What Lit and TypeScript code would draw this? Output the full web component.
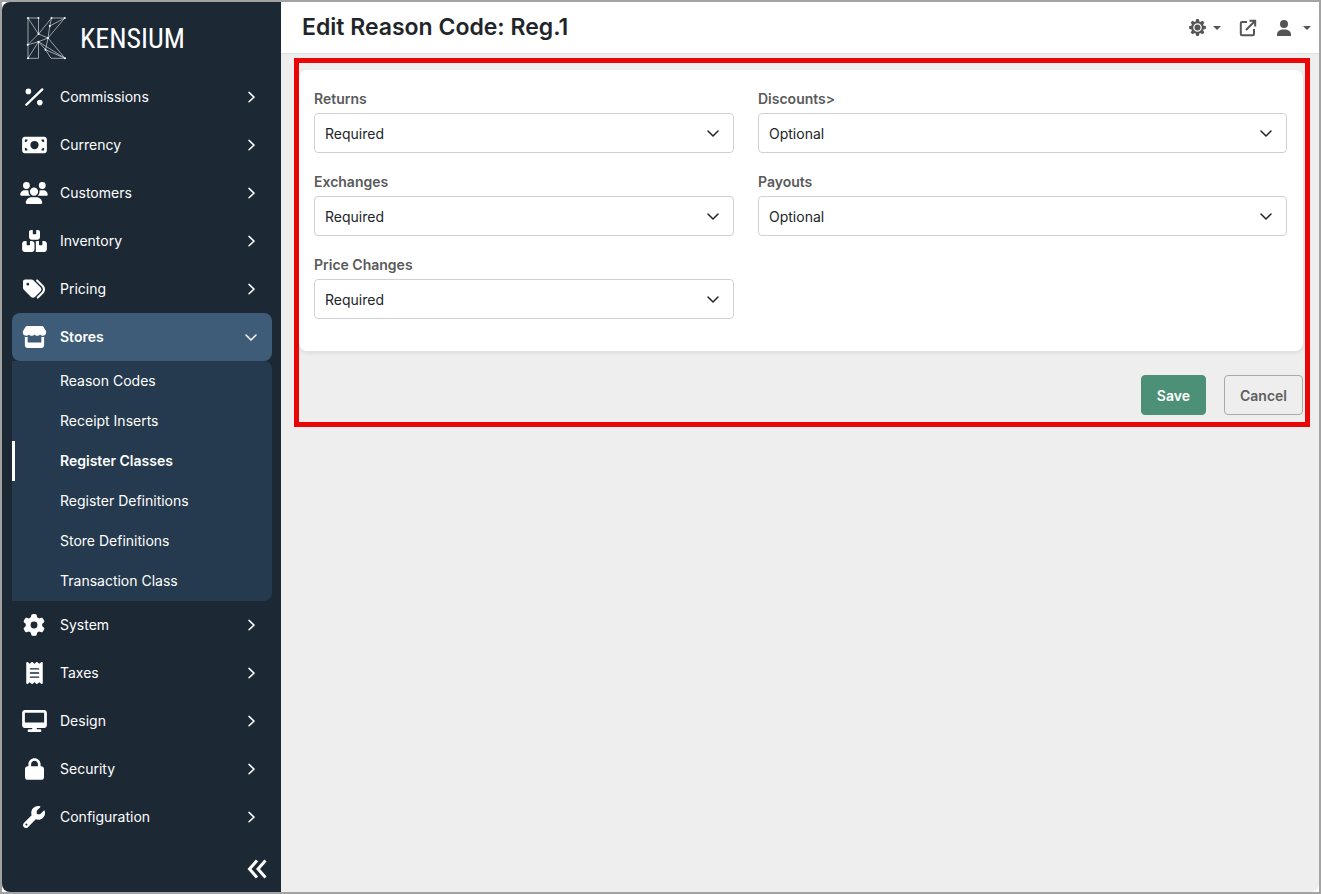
import { LitElement, html, svg, css, nothing } from "lit";
import { customElement, property, state } from "lit/decorators.js";
import { classMap } from "lit/directives/class-map.js";

interface Icon {
  box: string;
  width: number;
  height: number;
  path: string;
}

const ICONS: Record<string, Icon> = {
  percent: {
    box: "0 0 24 22",
    width: 24,
    height: 22,
    path: "M19.4 2.6a1.2 1.2 0 0 1 1.7 1.7L5.2 19.6a1.2 1.2 0 0 1-1.7-1.7zM6.4 2.6a2.8 2.8 0 1 1 0 5.6 2.8 2.8 0 1 1 0-5.6zM17.8 13.8a2.8 2.8 0 1 1 0 5.6 2.8 2.8 0 1 1 0-5.6z",
  },
  money: {
    box: "0 0 576 512",
    width: 25,
    height: 22,
    path: "M64 64C28.7 64 0 92.7 0 128V384c0 35.3 28.7 64 64 64H512c35.3 0 64-28.7 64-64V128c0-35.3-28.7-64-64-64H64zm64 320H64V320c35.3 0 64 28.7 64 64zM64 192V128h64c0 35.3-28.7 64-64 64zM448 384c0-35.3 28.7-64 64-64v64H448zm64-192c-35.3 0-64-28.7-64-64h64v64zM288 160a96 96 0 1 1 0 192 96 96 0 1 1 0-192z",
  },
  users: {
    box: "0 0 640 512",
    width: 28,
    height: 22,
    path: "M144 0a80 80 0 1 1 0 160A80 80 0 1 1 144 0zM512 0a80 80 0 1 1 0 160A80 80 0 1 1 512 0zM0 298.7C0 239.8 47.8 192 106.7 192h42.7c15.9 0 31 3.5 44.6 9.7c-1.3 7.2-1.9 14.7-1.9 22.3c0 38.2 16.8 72.5 43.3 96c-.2 0-.4 0-.7 0H21.3C9.6 320 0 310.4 0 298.7zM405.3 320c-.2 0-.4 0-.7 0c26.6-23.5 43.3-57.8 43.3-96c0-7.6-.7-15-1.9-22.3c13.6-6.3 28.7-9.7 44.6-9.7h42.7C592.2 192 640 239.8 640 298.7c0 11.8-9.6 21.3-21.3 21.3H405.3zM224 224a96 96 0 1 1 192 0 96 96 0 1 1 -192 0zM128 485.3C128 411.7 187.7 352 261.3 352H378.7C452.3 352 512 411.7 512 485.3c0 14.7-11.9 26.7-26.7 26.7H154.7c-14.7 0-26.7-11.9-26.7-26.7z",
  },
  boxes: {
    box: "0 0 576 512",
    width: 25,
    height: 22,
    path: "M248 0H208c-26.5 0-48 21.5-48 48V160c0 35.3 28.7 64 64 64H352c35.3 0 64-28.7 64-64V48c0-26.5-21.5-48-48-48H328V80c0 8.8-7.2 16-16 16H264c-8.8 0-16-7.2-16-16V0zM64 256c-35.3 0-64 28.7-64 64V448c0 35.3 28.7 64 64 64H224c35.3 0 64-28.7 64-64V320c0-35.3-28.7-64-64-64H184v80c0 8.8-7.2 16-16 16H120c-8.8 0-16-7.2-16-16V256H64zM352 512H512c35.3 0 64-28.7 64-64V320c0-35.3-28.7-64-64-64H472v80c0 8.8-7.2 16-16 16H408c-8.8 0-16-7.2-16-16V256H352c-15 0-28.8 5.1-39.7 13.8c4.9 10.4 7.7 22 7.7 34.2V464c0 12.2-2.8 23.8-7.7 34.2C323.2 506.9 337 512 352 512z",
  },
  tags: {
    box: "0 0 512 512",
    width: 22,
    height: 22,
    path: "M345 39.1L472.8 168.4c52.4 53 52.4 138.2 0 191.2L360.8 472.9c-9.3 9.4-24.5 9.5-33.9 .2s-9.5-24.5-.2-33.9L438.6 325.9c33.9-34.3 33.9-89.4 0-123.7L310.9 72.9c-9.3-9.4-9.2-24.6 .2-33.9s24.6-9.2 33.9 .2zM0 229.5V80C0 53.5 21.5 32 48 32H197.5c17 0 33.3 6.7 45.3 18.7l168 168c25 25 25 65.5 0 90.5L277.3 442.7c-25 25-65.5 25-90.5 0l-168-168C6.7 262.7 0 246.5 0 229.5zM144 144a32 32 0 1 0 -64 0 32 32 0 1 0 64 0z",
  },
  store: {
    box: "0 0 576 512",
    width: 25,
    height: 22,
    path: "M547.6 103.8L490.3 13.1C485.2 5 476.1 0 466.4 0H109.6C99.9 0 90.8 5 85.7 13.1L28.3 103.8c-29.6 46.8-3.4 111.9 51.9 119.4c4 .5 8.1 .8 12.1 .8c26.1 0 49.3-11.4 65.2-29c15.9 17.6 39.1 29 65.2 29c26.1 0 49.3-11.4 65.2-29c15.9 17.6 39.1 29 65.2 29c26.2 0 49.3-11.4 65.2-29c16 17.6 39.1 29 65.2 29c4.1 0 8.1-.3 12.1-.8c55.5-7.4 81.8-72.5 52.1-119.4zM499.7 254.9l-.1 0c-5.3 .7-10.7 1.1-16.2 1.1c-12.4 0-24.3-1.9-35.4-5.3V384H128V250.6c-11.2 3.5-23.2 5.4-35.6 5.4c-5.5 0-11-.4-16.3-1.1l-.1 0c-4.1-.6-8.1-1.3-12-2.3V384v64c0 35.3 28.7 64 64 64H448c35.3 0 64-28.7 64-64V384 252.6c-4 1-8 1.8-12.3 2.3z",
  },
  gear: {
    box: "0 0 512 512",
    width: 22,
    height: 22,
    path: "M495.9 166.6c3.2 8.7 .5 18.4-6.4 24.6l-43.3 39.4c1.1 8.3 1.7 16.8 1.7 25.4s-.6 17.1-1.7 25.4l43.3 39.4c6.9 6.2 9.6 15.9 6.4 24.6c-4.4 11.9-9.7 23.3-15.8 34.3l-4.7 8.1c-6.6 11-14 21.4-22.1 31.2c-5.9 7.2-15.7 9.6-24.5 6.8l-55.7-17.7c-13.4 10.3-28.2 18.9-44 25.4l-12.5 57.1c-2 9.1-9 16.3-18.2 17.8c-13.8 2.3-28 3.5-42.5 3.5s-28.7-1.2-42.5-3.5c-9.2-1.5-16.2-8.7-18.2-17.8l-12.5-57.1c-15.8-6.5-30.6-15.1-44-25.4L83.1 425.9c-8.8 2.8-18.6 .3-24.5-6.8c-8.1-9.8-15.5-20.2-22.1-31.2l-4.7-8.1c-6.1-11-11.4-22.4-15.8-34.3c-3.2-8.7-.5-18.4 6.4-24.6l43.3-39.4C64.6 273.1 64 264.6 64 256s.6-17.1 1.7-25.4L22.4 191.2c-6.9-6.2-9.6-15.9-6.4-24.6c4.4-11.9 9.7-23.3 15.8-34.3l4.7-8.1c6.6-11 14-21.4 22.1-31.2c5.9-7.2 15.7-9.6 24.5-6.8l55.7 17.7c13.4-10.3 28.2-18.9 44-25.4l12.5-57.1c2-9.1 9-16.3 18.2-17.8C227.3 1.2 241.5 0 256 0s28.7 1.2 42.5 3.5c9.2 1.5 16.2 8.7 18.2 17.8l12.5 57.1c15.8 6.5 30.6 15.1 44 25.4l55.7-17.7c8.8-2.8 18.6-.3 24.5 6.8c8.1 9.8 15.5 20.2 22.1 31.2l4.7 8.1c6.1 11 11.4 22.4 15.8 34.3zM256 336a80 80 0 1 0 0-160 80 80 0 1 0 0 160z",
  },
  receipt: {
    box: "0 0 384 512",
    width: 17,
    height: 22,
    path: "M14 2.2C22.5-1.7 32.5-.3 39.6 5.8L80 40.4 120.4 5.8c9-7.7 22.3-7.7 31.2 0L192 40.4 232.4 5.8c9-7.7 22.2-7.7 31.2 0L304 40.4 344.4 5.8c7.1-6.1 17.1-7.5 25.6-3.6s14 12.4 14 21.8V488c0 9.4-5.5 17.9-14 21.8s-18.5 2.5-25.6-3.6L304 471.6l-40.4 34.6c-9 7.7-22.2 7.7-31.2 0L192 471.6l-40.4 34.6c-9 7.7-22.3 7.7-31.2 0L80 471.6 39.6 506.2c-7.1 6.1-17.1 7.5-25.6 3.6S0 497.4 0 488V24C0 14.6 5.5 6.1 14 2.2zM96 144c-8.8 0-16 7.2-16 16s7.2 16 16 16H288c8.8 0 16-7.2 16-16s-7.2-16-16-16H96zM80 352c0 8.8 7.2 16 16 16H288c8.8 0 16-7.2 16-16s-7.2-16-16-16H96c-8.8 0-16 7.2-16 16zM96 240c-8.8 0-16 7.2-16 16s7.2 16 16 16H288c8.8 0 16-7.2 16-16s-7.2-16-16-16H96z",
  },
  desktop: {
    box: "0 0 576 512",
    width: 25,
    height: 22,
    path: "M64 0C28.7 0 0 28.7 0 64V352c0 35.3 28.7 64 64 64H240l-10.7 32H160c-17.7 0-32 14.3-32 32s14.3 32 32 32H416c17.7 0 32-14.3 32-32s-14.3-32-32-32H346.7L336 416H512c35.3 0 64-28.7 64-64V64c0-35.3-28.7-64-64-64H64zM512 64V288H64V64H512z",
  },
  lock: {
    box: "0 0 448 512",
    width: 19,
    height: 22,
    path: "M144 144v48H304V144c0-44.2-35.8-80-80-80s-80 35.8-80 80zM80 192V144C80 64.5 144.5 0 224 0s144 64.5 144 144v48h16c35.3 0 64 28.7 64 64V448c0 35.3-28.7 64-64 64H64c-35.3 0-64-28.7-64-64V256c0-35.3 28.7-64 64-64H80z",
  },
  wrench: {
    box: "0 0 512 512",
    width: 22,
    height: 22,
    path: "M352 320c88.4 0 160-71.6 160-160c0-15.3-2.2-30.1-6.2-44.2c-3.1-10.8-16.4-13.2-24.3-5.3l-76.8 76.8c-3 3-7.1 4.7-11.3 4.7H336c-8.8 0-16-7.2-16-16V118.6c0-4.2 1.7-8.3 4.7-11.3l76.8-76.8c7.9-7.9 5.4-21.2-5.3-24.3C382.1 2.2 367.3 0 352 0C263.6 0 192 71.6 192 160c0 19.1 3.4 37.5 9.5 54.5L19.9 396.1C7.2 408.8 0 426.1 0 444.1C0 481.6 30.4 512 67.9 512c18 0 35.3-7.2 48-19.9L297.5 310.5c17 6.2 35.4 9.5 54.5 9.5zM80 408a24 24 0 1 1 0 48 24 24 0 1 1 0-48z",
  },
};

const chevron = (down: boolean) => html`
  <svg width="14" height="14" viewBox="0 0 14 14" fill="none" stroke="currentColor" stroke-width="1.5" stroke-linecap="round" stroke-linejoin="round" aria-hidden="true">
    <path d=${down ? "M2 5l5 5 5-5" : "M5 2.4l5 4.7-5 4.7"}></path>
  </svg>
`;

interface Section {
  label: string;
  icon: string;
  children?: string[];
}

const SECTIONS: Section[] = [
  { label: "Commissions", icon: "percent" },
  { label: "Currency", icon: "money" },
  { label: "Customers", icon: "users" },
  { label: "Inventory", icon: "boxes" },
  { label: "Pricing", icon: "tags" },
  {
    label: "Stores",
    icon: "store",
    children: ["Reason Codes", "Receipt Inserts", "Register Classes", "Register Definitions", "Store Definitions", "Transaction Class"],
  },
  { label: "System", icon: "gear" },
  { label: "Taxes", icon: "receipt" },
  { label: "Design", icon: "desktop" },
  { label: "Security", icon: "lock" },
  { label: "Configuration", icon: "wrench" },
];

@customElement("side-nav")
export class SideNav extends LitElement {
  @property() current = "Register Classes";
  @state() private open = "Stores";

  static styles = css`
    :host {
      display: flex;
      flex-direction: column;
      box-sizing: border-box;
      width: 279px;
      flex: none;
      background: #1c2935;
      color: #fff;
    }
    .brand {
      display: flex;
      align-items: center;
      gap: 13px;
      height: 71px;
      padding: 0 24px;
      color: #fff;
      text-decoration: none;
    }
    .brand svg {
      flex: none;
    }
    .wordmark {
      padding-top: 2px;
      font: 400 28px/28px "Roboto Condensed", Roboto, sans-serif;
    }
    nav {
      padding: 0 9px 0 10px;
    }
    ul {
      list-style: none;
      margin: 0;
      padding: 0;
    }
    .section {
      display: flex;
      align-items: center;
      width: 100%;
      height: 48px;
      padding: 0 14px 0 8px;
      border: 0;
      border-radius: 8px;
      background: none;
      color: inherit;
      font: 400 14px/20px Inter, sans-serif;
      text-align: left;
      cursor: pointer;
    }
    .section.open {
      background: #3e5c78;
      font-weight: 600;
    }
    .glyph {
      display: flex;
      justify-content: center;
      width: 28px;
      margin-right: 12px;
    }
    .text {
      flex: 1;
    }
    .sub {
      background: #253a4e;
      border-radius: 0 8px 8px 0;
    }
    .sub a {
      display: block;
      padding: 10px 16px 10px 45px;
      border-left: 3px solid transparent;
      color: inherit;
      font: 400 14px/20px Inter, sans-serif;
      text-decoration: none;
    }
    .sub a.current {
      border-color: #fff;
      font-weight: 600;
    }
    .collapse {
      display: flex;
      align-self: flex-end;
      margin: auto 12px 10px 0;
      padding: 0;
      border: 0;
      background: none;
      color: inherit;
      cursor: pointer;
    }
  `;

  private icon(name: string) {
    const i = ICONS[name];
    return html`<svg width=${i.width} height=${i.height} viewBox=${i.box} fill="currentColor" aria-hidden="true"><path d=${i.path}></path></svg>`;
  }

  private logo() {
    const nodes = [
      [2, 3], [12.5, 3], [25.5, 3], [38.8, 3], [23.8, 11], [12.5, 19], [22, 23],
      [1.7, 29.8], [12.5, 26.7], [19.5, 34.7], [2, 43.3], [39, 43.3],
    ];
    return html`
      <svg width="41" height="45" viewBox="0 0 41 45" aria-hidden="true">
        <path
          d="M2 3H12.500V19L25.500 3H38.800L22 23L39 43.300H25L19.500 34.700L12.500 26.700V43.300H2ZM2 3L12.500 19L1.700 29.800L12.500 26.700L22 23L12.500 19M25.500 3L23.800 11L38.800 3M23.800 11L22 23L19.500 34.700L39 43.300L12.500 26.700L2 43.300"
          fill="none"
          stroke="#bcc2c7"
          stroke-width="0.8"
        ></path>
        ${nodes.map(([x, y]) => svg`<circle cx=${x} cy=${y} r="1" fill="#fff"></circle>`)}
      </svg>
    `;
  }

  render() {
    return html`
      <a class="brand" href="#home">${this.logo()}<span class="wordmark">KENSIUM</span></a>
      <nav aria-label="Main">
        <ul>
          ${SECTIONS.map((s) => {
            const open = s.label === this.open;
            return html`
              <li>
                <button
                  type="button"
                  class=${classMap({ section: true, open })}
                  aria-expanded=${open}
                  @click=${() => (this.open = open ? "" : s.label)}
                >
                  <span class="glyph">${this.icon(s.icon)}</span>
                  <span class="text">${s.label}</span>
                  ${chevron(open)}
                </button>
                ${open && s.children
                  ? html`<ul class="sub">
                      ${s.children.map((c) => html`<li><a href="#" class=${classMap({ current: c === this.current })}>${c}</a></li>`)}
                    </ul>`
                  : nothing}
              </li>
            `;
          })}
        </ul>
      </nav>
      <button class="collapse" type="button" aria-label="Collapse menu">
        <svg width="24" height="26" viewBox="0 0 24 26" fill="none" stroke="currentColor" stroke-width="3" aria-hidden="true">
          <path d="M12 4.500L4.500 13l7.500 8.500M20.500 4.500L13 13l7.500 8.500"></path>
        </svg>
      </button>
    `;
  }
}

@customElement("select-field")
export class SelectField extends LitElement {
  @property() label = "";
  @property() value = "Required";

  static styles = css`
    :host {
      display: flex;
      flex-direction: column;
      gap: 4px;
      min-width: 0;
    }
    label {
      color: #5a5a5a;
      font: 600 14px/20px Inter, sans-serif;
    }
    .control {
      display: grid;
      align-items: center;
      color: #212529;
    }
    select,
    svg {
      grid-area: 1 / 1;
    }
    select {
      appearance: none;
      box-sizing: border-box;
      width: 100%;
      height: 40px;
      padding: 2px 40px 0 10px;
      border: 1px solid #d0d1d8;
      border-radius: 4px;
      background: #fff;
      color: inherit;
      font: 400 14px/20px Inter, sans-serif;
    }
    svg {
      justify-self: end;
      margin-right: 14px;
      pointer-events: none;
    }
  `;

  render() {
    return html`
      <label for="field">${this.label}</label>
      <div class="control">
        <select id="field">
          ${["Required", "Optional"].map((o) => html`<option ?selected=${o === this.value}>${o}</option>`)}
        </select>
        ${chevron(true)}
      </div>
    `;
  }
}

@customElement("app-root")
export class AppRoot extends LitElement {
  static styles = css`
    :host {
      display: flex;
      box-sizing: border-box;
      min-height: 100vh;
      border: 2px solid #a3a3a3;
      background: #fff;
      font-family: Inter, sans-serif;
    }
    .window {
      display: flex;
      flex: 1;
      min-width: 0;
      border-radius: 8px;
      overflow: hidden;
      background: #eee;
    }
    main {
      flex: 1;
      min-width: 0;
    }
    header {
      display: flex;
      align-items: center;
      justify-content: space-between;
      box-sizing: border-box;
      height: 52px;
      padding: 0 8px 0 21px;
      border-bottom: 1px solid #e0e0e0;
      background: #fff;
    }
    h1 {
      margin: 0;
      padding-bottom: 2px;
      color: #212529;
      font-size: 23px;
      font-weight: 600;
      line-height: 30px;
    }
    .tools {
      display: flex;
      align-items: center;
      gap: 18px;
      color: #555;
    }
    .tool {
      display: flex;
      align-items: center;
      gap: 7px;
      padding: 0;
      border: 0;
      background: none;
      color: inherit;
      cursor: pointer;
    }
    .tool.account {
      gap: 10px;
    }
    form {
      margin: 4px 9px 0 13px;
      padding: 7px 2px 7px 0;
      border: 5px solid #ea0606;
    }
    .card {
      display: grid;
      grid-template-columns: 420fr 529fr;
      column-gap: 24px;
      padding: 19px 16px 32px 15px;
      border-radius: 8px;
      background: #fff;
      box-shadow: 0 2px 4px rgba(0, 0, 0, 0.08);
    }
    .column {
      display: flex;
      flex-direction: column;
      gap: 19px;
      min-width: 0;
    }
    .actions {
      display: flex;
      justify-content: flex-end;
      gap: 18px;
      margin-top: 24px;
    }
    .btn {
      height: 40px;
      padding: 2px 15px 0;
      border: 1px solid #aaa;
      border-radius: 4px;
      background: transparent;
      color: #5f5f5f;
      font: 600 14px/20px Inter, sans-serif;
      cursor: pointer;
    }
    .btn.primary {
      border-color: #4c9078;
      background: #4c9078;
      color: #fff;
    }
  `;

  private caret() {
    return html`<svg width="8" height="4" viewBox="0 0 8 4" fill="currentColor" aria-hidden="true"><path d="M0 0H8L4 4Z"></path></svg>`;
  }

  render() {
    return html`
      <div class="window">
        <side-nav></side-nav>
        <main>
          <header>
            <h1>Edit Reason Code: Reg.1</h1>
            <div class="tools">
              <button class="tool" type="button" aria-label="Settings">
                <svg width="17" height="17" viewBox="-8.5 -8.5 17 17" aria-hidden="true">
                  <circle r="5.2" fill="none" stroke="currentColor" stroke-width="1.8"></circle>
                  ${[0, 45, 90, 135, 180, 225, 270, 315].map(
                    (a) => svg`<path d="M-2.200 -5.200L-1.200 -8.400H1.200L2.200 -5.200Z" fill="currentColor" transform="rotate(${a})"></path>`
                  )}
                  <circle r="3" fill="currentColor"></circle>
                </svg>
                ${this.caret()}
              </button>
              <button class="tool" type="button" aria-label="Open in new window">
                <svg width="18" height="18" viewBox="0 0 18 18" fill="none" stroke="currentColor" stroke-width="2" stroke-linejoin="round" aria-hidden="true">
                  <path d="M8 3H3a1.200 1.200 0 0 0-1.200 1.200V15a1.200 1.200 0 0 0 1.200 1.200H13.800a1.200 1.200 0 0 0 1.200-1.200V10"></path>
                  <path d="M7 11L15.500 2.500M10.500 1.800H16.200V7.500" stroke-linejoin="miter"></path>
                </svg>
              </button>
              <button class="tool account" type="button" aria-label="Account">
                <svg width="18" height="18" viewBox="0 0 18 18" fill="currentColor" aria-hidden="true">
                  <circle cx="9" cy="5" r="4"></circle>
                  <path d="M2 17V15.500C2 12.500 4.500 10.500 9 10.500S16 12.500 16 15.500V17Z"></path>
                </svg>
                ${this.caret()}
              </button>
            </div>
          </header>
          <form @submit=${(e: Event) => e.preventDefault()}>
            <div class="card">
              <div class="column">
                <select-field label="Returns"></select-field>
                <select-field label="Exchanges"></select-field>
                <select-field label="Price Changes"></select-field>
              </div>
              <div class="column">
                <select-field label="Discounts>" value="Optional"></select-field>
                <select-field label="Payouts" value="Optional"></select-field>
              </div>
            </div>
            <div class="actions">
              <button class="btn primary" type="submit">Save</button>
              <button class="btn" type="button">Cancel</button>
            </div>
          </form>
        </main>
      </div>
    `;
  }
}
